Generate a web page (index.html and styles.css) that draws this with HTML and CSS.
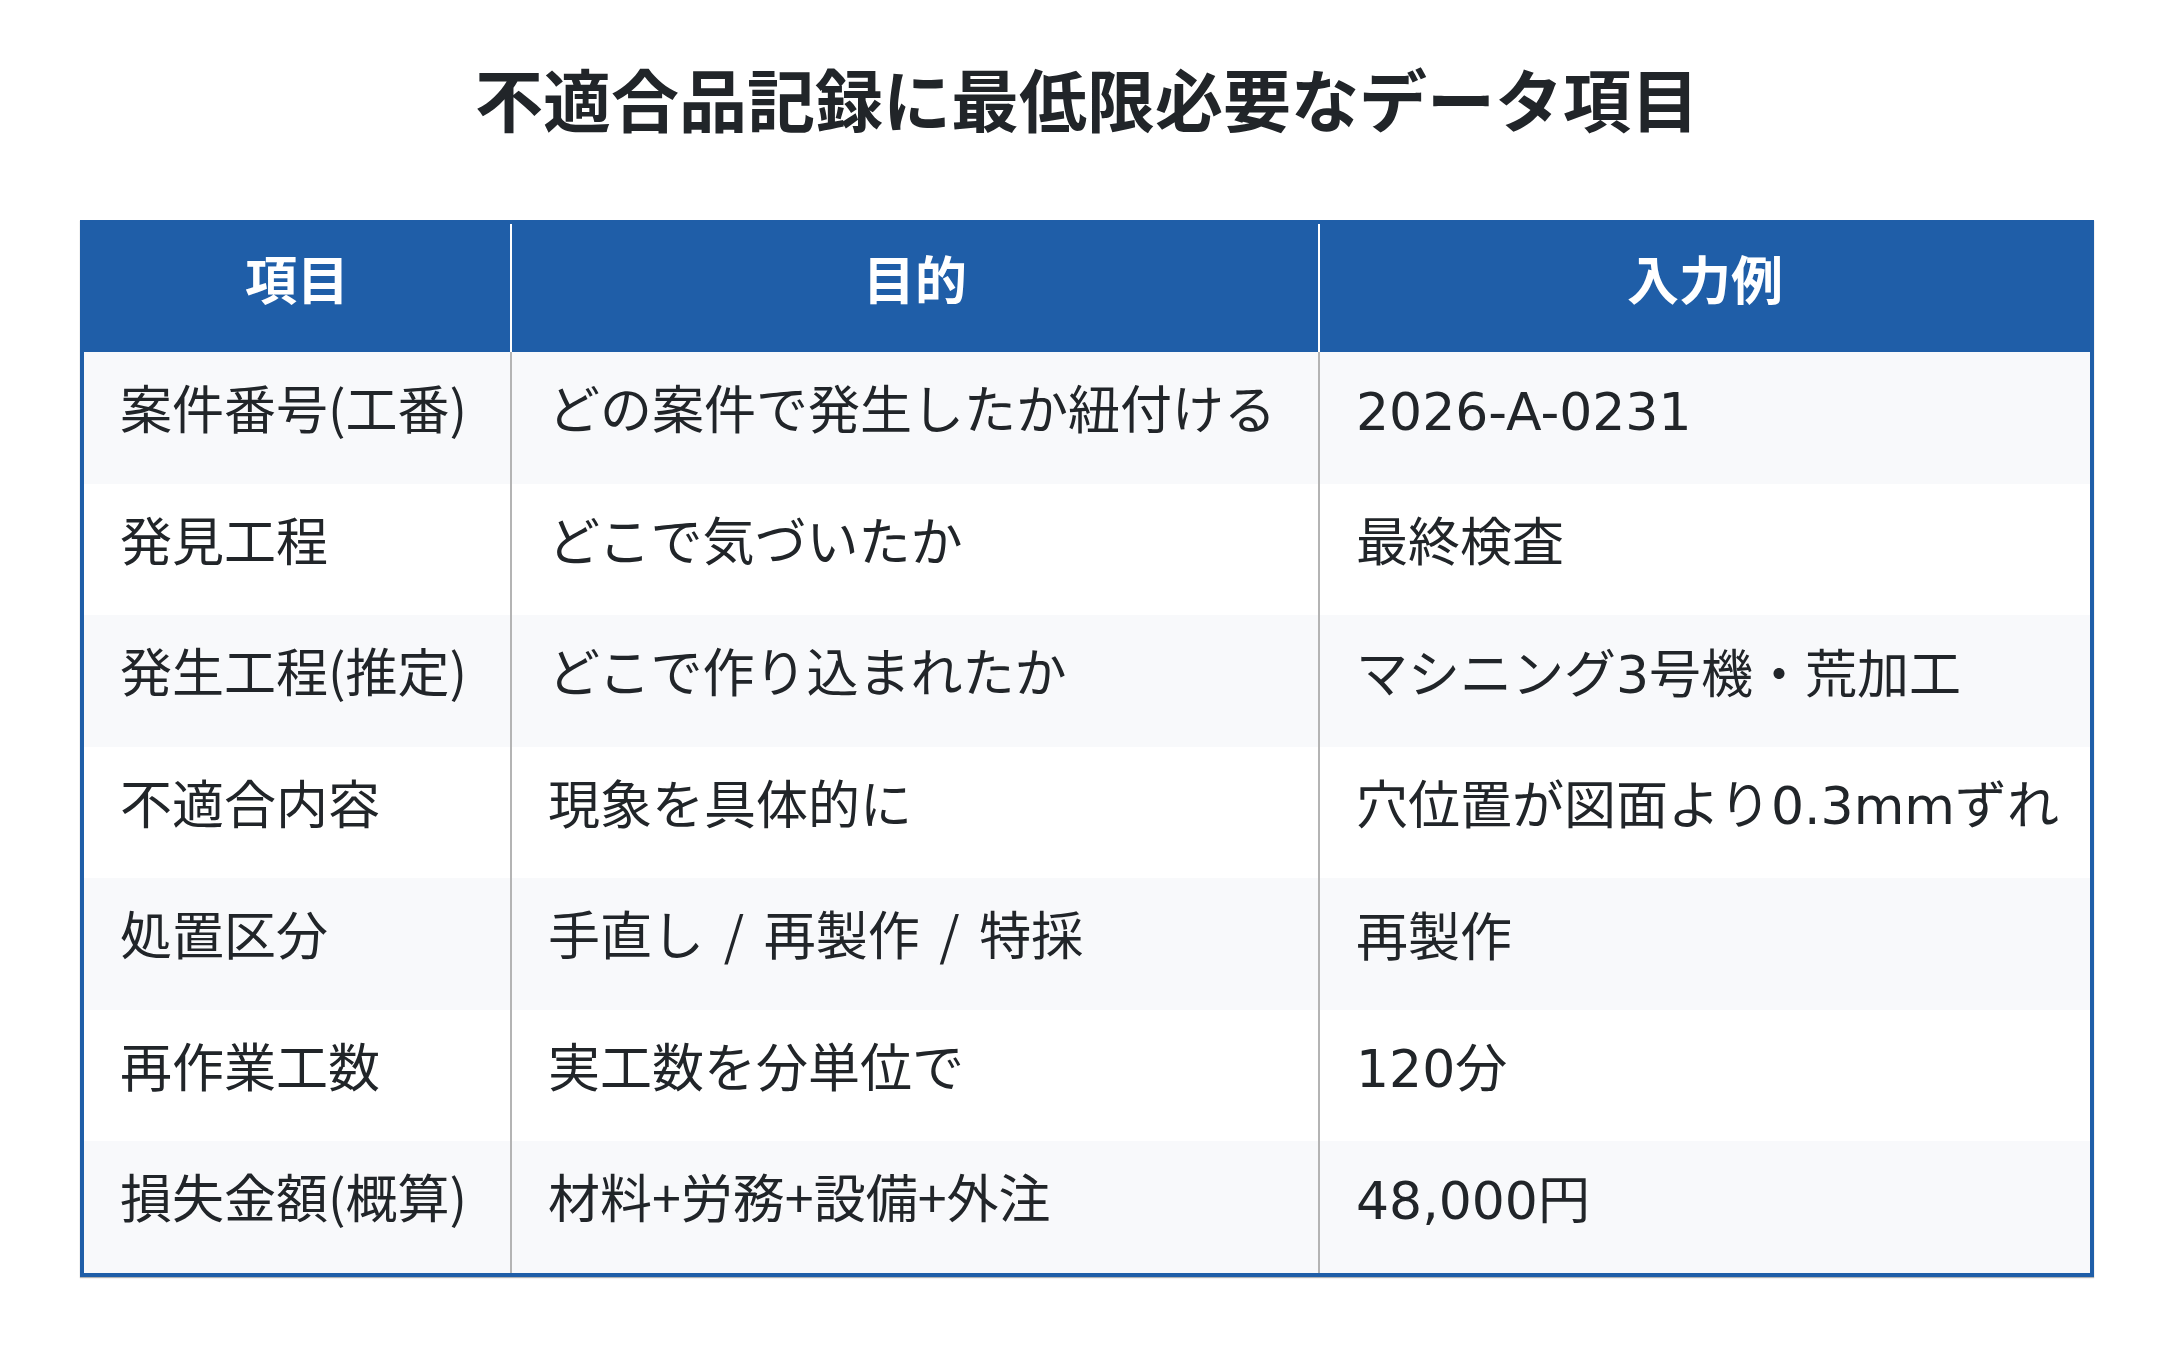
FILE: index.html
```html
<!DOCTYPE html>
<html lang="ja">
<head>
<meta charset="utf-8">
<title>不適合品記録に最低限必要なデータ項目</title>
<link rel="stylesheet" href="styles.css">
</head>
<body>
<main class="page">
  <h1 class="title">不適合品記録に最低限必要なデータ項目</h1>
  <table class="data-table">
    <thead>
      <tr>
        <th class="col-item">項目</th>
        <th class="col-purpose">目的</th>
        <th class="col-example">入力例</th>
      </tr>
    </thead>
    <tbody>
      <tr><td>案件番号(工番)</td><td>どの案件で発生したか紐付ける</td><td class="example">2026-A-0231</td></tr>
      <tr><td>発見工程</td><td>どこで気づいたか</td><td class="example">最終検査</td></tr>
      <tr><td>発生工程(推定)</td><td>どこで作り込まれたか</td><td class="example">マシニング3号機・荒加工</td></tr>
      <tr><td>不適合内容</td><td>現象を具体的に</td><td class="example">穴位置が図面より0.3mmずれ</td></tr>
      <tr><td>処置区分</td><td class="options">手直し / 再製作 / 特採</td><td class="example">再製作</td></tr>
      <tr><td>再作業工数</td><td>実工数を分単位で</td><td class="example">120分</td></tr>
      <tr><td>損失金額(概算)</td><td>材料+労務+設備+外注</td><td class="example">48,000円</td></tr>
    </tbody>
  </table>
</main>
</body>
</html>
```

FILE: styles.css
```css
html, body {
  margin: 0;
  padding: 0;
  background: #ffffff;
}

.page {
  padding: 49px 80px 40px 80px;
  font-family: "Noto Sans CJK JP", "Noto Sans", sans-serif;
  color: #212529;
}

.title {
  margin: 0 0 73px 0;
  text-align: center;
  font-size: 68px;
  line-height: 98px;
  font-weight: 700;
  color: #212529;
}

.data-table {
  width: 100%;
  table-layout: fixed;
  border-collapse: separate;
  border-spacing: 0;
  border: 4px solid #1f5ea8;
  box-shadow: 0 1px 1px rgba(0, 0, 0, 0.3);
  font-size: 52px;
  line-height: 78px;
}

.data-table th,
.data-table td {
  box-sizing: border-box;
  white-space: nowrap;
}

.data-table th {
  background: #1f5ea8;
  color: #ffffff;
  font-weight: 700;
  text-align: center;
  padding: 15px 36px 35px 36px;
  border-right: 2px solid #ffffff;
}

.data-table th:last-child,
.data-table td:last-child {
  border-right: none;
}

.col-item {
  width: 428px;
}

.col-purpose {
  width: 808px;
}

.data-table td {
  padding: 16px 36px 37.5px 36px;
  font-weight: 400;
  text-align: left;
  border-right: 2px solid #b4b4b4;
  background: #ffffff;
}

.data-table tbody tr:nth-child(odd) td {
  background: #f8f9fb;
}

.data-table td.example {
  font-family: "DejaVu Sans", "Noto Sans CJK JP", sans-serif;
  padding-top: 20.5px;
  padding-bottom: 33px;
}

.data-table td.options {
  word-spacing: 8px;
}
```
